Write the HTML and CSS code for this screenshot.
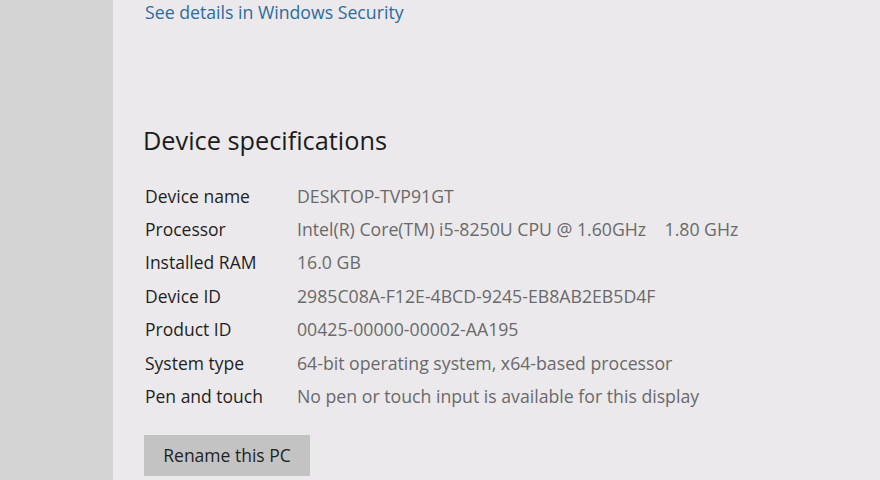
FILE: index.html
```html
<!DOCTYPE html>
<html>
<head>
    <title>About</title>
    <link rel="stylesheet" href="styles.css">
</head>
<body>
    <div class="page">
        <div class="sidebar"></div>
        <div class="main">
            <a class="link" href="#">See details in Windows Security</a>
            <h2>Device specifications</h2>
            <div class="specs">
                <div class="label">Device name</div>
                <div class="value">DESKTOP-TVP91GT</div>
                <div class="label">Processor</div>
                <div class="value">Intel(R) Core(TM) i5-8250U CPU @ 1.60GHz&nbsp;&nbsp;&nbsp;&nbsp;1.80 GHz</div>
                <div class="label">Installed RAM</div>
                <div class="value">16.0 GB</div>
                <div class="label">Device ID</div>
                <div class="value">2985C08A-F12E-4BCD-9245-EB8AB2EB5D4F</div>
                <div class="label">Product ID</div>
                <div class="value">00425-00000-00002-AA195</div>
                <div class="label">System type</div>
                <div class="value">64-bit operating system, x64-based processor</div>
                <div class="label">Pen and touch</div>
                <div class="value">No pen or touch input is available for this display</div>
            </div>
            <button>Rename this PC</button>
        </div>
    </div>
</body>
</html>
```

FILE: styles.css
```css
body {
    margin: 0;
    font-family: "Open Sans", "Noto Sans", sans-serif;
    background: #ebe9ec;
}
.page {
    display: flex;
    height: 480px;
    overflow: hidden;
}
.sidebar {
    width: 113px;
    flex-shrink: 0;
    background: #d4d4d4;
}
.main {
    flex: 1;
    padding: 1px 0 0 32px;
    display: flex;
    flex-direction: column;
    align-items: flex-start;
}
.link {
    color: #2b6c9e;
    text-decoration: none;
    font-size: 17.7px;
    line-height: 22px;
}
h2 {
    margin: 101px 0 0 -2px;
    font-size: 25.3px;
    font-weight: normal;
    color: #1c1c1c;
    line-height: 32px;
}
.specs {
    margin-top: 23px;
    display: grid;
    grid-template-columns: 152px auto;
    grid-auto-rows: 33.4px;
    align-items: center;
    font-size: 17.5px;
    white-space: nowrap;
}
.label {
    color: #1f1f1f;
}
.value {
    color: #6a6a6a;
    font-size: 17.7px;
}
button {
    margin-top: 22px;
    margin-left: -1px;
    width: 166px;
    height: 41px;
    border: none;
    background: #c3c3c3;
    font-family: inherit;
    font-size: 17.5px;
    color: #1f1f1f;
}
```
